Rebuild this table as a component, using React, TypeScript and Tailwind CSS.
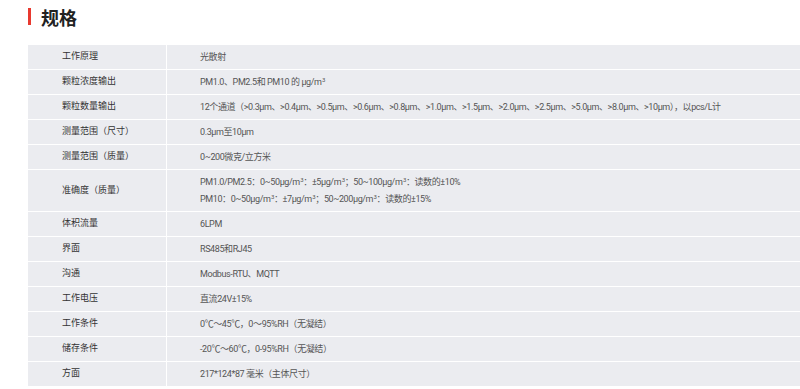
import React from "react";

type Row = { label: string; value: React.ReactNode[]; tall?: boolean };

const sup3 = <sup className="text-[6px] ml-[0.5px]">3</sup>;

const rows: Row[] = [
  { label: "工作原理", value: ["光散射"] },
  { label: "颗粒浓度输出", value: [<>PM1.0、PM2.5和 PM10 的 μg/m{sup3}</>] },
  {
    label: "颗粒数量输出",
    value: [
      "12个通道（>0.3μm、>0.4μm、>0.5μm、>0.6μm、>0.8μm、>1.0μm、>1.5μm、>2.0μm、>2.5μm、>5.0μm、>8.0μm、>10μm），以pcs/L计",
    ],
  },
  { label: "测量范围（尺寸）", value: ["0.3μm至10μm"] },
  { label: "测量范围（质量）", value: ["0~200微克/立方米"] },
  {
    label: "准确度（质量）",
    tall: true,
    value: [
      <>PM1.0/PM2.5：0~50μg/m{sup3}：±5μg/m{sup3}；50~100μg/m{sup3}：读数的±10%</>,
      <>PM10：0~50μg/m{sup3}：±7μg/m{sup3}；50~200μg/m{sup3}：读数的±15%</>,
    ],
  },
  { label: "体积流量", value: ["6LPM"] },
  { label: "界面", value: ["RS485和RJ45"] },
  { label: "沟通", value: ["Modbus-RTU、MQTT"] },
  { label: "工作电压", value: ["直流24V±15%"] },
  { label: "工作条件", value: ["0℃～45℃，0～95%RH（无凝结）"] },
  { label: "储存条件", value: ["-20℃～60℃，0-95%RH（无凝结）"] },
  { label: "方面", value: ["217*124*87 毫米（主体尺寸）"] },
];

export default function App() {
  return (
    <div className="w-[800px] h-[389px] overflow-hidden bg-white font-['Roboto','Noto_Sans_CJK_SC',sans-serif]">
      {/* heading */}
      <div className="flex items-center h-[32px] pl-[28px] pt-[1px]">
        <div className="w-[3px] h-[17px] bg-[#e8392f]" />
        <h2 className="ml-[10px] text-[18px] font-bold text-[#222] leading-none font-['Noto_Sans_CJK_SC',sans-serif]">
          规格
        </h2>
      </div>

      {/* spec table */}
      <div className="ml-[28px] mt-[13px] bg-[#ebecf0] text-[9px]">
        {rows.map((r) => (
          <div
            key={r.label}
            className={`flex border-b border-white ${r.tall ? "h-[42px]" : "h-[25px]"}`}
          >
            <div className="w-[139px] shrink-0 flex items-center pl-[34px] text-[#333] border-r border-white">
              {r.label}
            </div>
            <div className="flex flex-col justify-center pl-[33px] text-[#555] leading-[17px] tracking-[-0.4px] whitespace-nowrap">
              {r.value.map((v, i) => (
                <div key={i}>{v}</div>
              ))}
            </div>
          </div>
        ))}
      </div>
    </div>
  );
}
